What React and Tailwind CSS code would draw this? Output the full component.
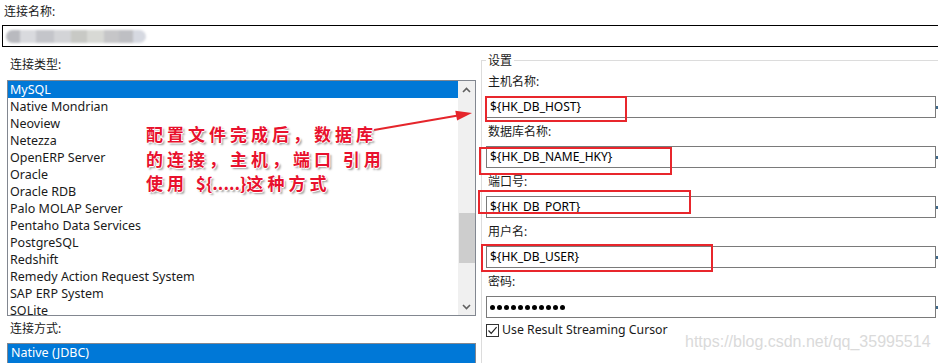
import React from 'react';

const TYPES = [
  'MySQL',
  'Native Mondrian',
  'Neoview',
  'Netezza',
  'OpenERP Server',
  'Oracle',
  'Oracle RDB',
  'Palo MOLAP Server',
  'Pentaho Data Services',
  'PostgreSQL',
  'Redshift',
  'Remedy Action Request System',
  'SAP ERP System',
  'SQLite',
];

const FIELDS = [
  { label: '主机名称:', value: '${HK_DB_HOST}' },
  { label: '数据库名称:', value: '${HK_DB_NAME_HKY}' },
  { label: '端口号:', value: '${HK_DB_PORT}' },
  { label: '用户名:', value: '${HK_DB_USER}' },
];

// label + boxed input, the little tick is the clipped button on the right
function Field({ label, children }) {
  return (
    <div>
      <div className="h-[28px] pt-[6px] pl-[2px] leading-[16px]">{label}</div>
      <div className="flex items-center">
        <div className="w-[450px] h-[22px] border border-[#7a7a7a] pl-[3px] leading-[20px] text-black">
          {children}
        </div>
        <div className="w-[2px] h-[3px] bg-[#3f6a8c]" />
      </div>
    </div>
  );
}

function Chevron({ up }) {
  return (
    <svg width="9" height="6" viewBox="0 0 9 6">
      <path
        d={up ? 'M1 5 L4.5 1.5 L8 5' : 'M1 1 L4.5 4.5 L8 1'}
        fill="none"
        stroke="#606060"
        strokeWidth="1.6"
      />
    </svg>
  );
}

const BLURS = [
  ['w-[14px]', 'bg-[#b9babf]', 'rounded-l-full'],
  ['w-[16px]', 'bg-[#d9dade]', ''],
  ['w-[18px]', 'bg-[#c4c5ca]', ''],
  ['w-[17px]', 'bg-[#d3d4d7]', ''],
  ['w-[16px]', 'bg-[#c8c9c5]', ''],
  ['w-[17px]', 'bg-[#d8d9d5]', ''],
  ['w-[15px]', 'bg-[#c6c6c8]', ''],
  ['w-[14px]', 'bg-[#bebfc3]', ''],
  ['w-[13px]', 'bg-[#d6d9e1]', 'rounded-r-full'],
];

export default function App() {
  return (
    <div className="relative w-[938px] h-[363px] overflow-hidden bg-white text-[12px] text-[#1a1a1a] font-['Noto_Sans','Noto_Sans_CJK_SC',sans-serif]">
      {/* connection name */}
      <div className="h-[25px] pt-[4px] pl-[4px] leading-[16px]">连接名称:</div>
      <div className="ml-[2px] w-[960px] h-[22px] border border-black">
        <div className="flex items-center h-full pl-[3px] blur-[1px]">
          {BLURS.map(([w, bg, r], i) => (
            <div key={i} className={`${w} h-[13px] ${bg} ${r}`} />
          ))}
        </div>
      </div>

      <div className="flex">
        {/* left column */}
        <div className="w-[481px] shrink-0 pl-[7px]">
          <div className="h-[33px] pt-[10px] pl-[3px] leading-[16px]">连接类型:</div>
          <div className="w-[469px] h-[236px] border border-[#828790] flex overflow-hidden">
            <div className="w-[450px] text-[12.5px]">
              {TYPES.map((t, i) => (
                <div
                  key={t}
                  className={`h-[17px] leading-[17px] pl-[2px] whitespace-nowrap ${
                    i === 0 ? 'bg-[#0078d7] text-white' : ''
                  }`}
                >
                  {t}
                </div>
              ))}
            </div>
            <div className="w-[17px] bg-[#f0f0f0] flex flex-col items-center">
              <div className="h-[17px] flex items-center justify-center">
                <Chevron up />
              </div>
              <div className="flex-1 w-full pl-px">
                <div className="mt-[115px] w-[16px] h-[50px] bg-[#cdcdcd]" />
              </div>
              <div className="h-[17px] flex items-center justify-center">
                <Chevron />
              </div>
            </div>
          </div>
          <div className="h-[27px] pt-[5px] pl-[3px] leading-[16px]">连接方式:</div>
          <div className="w-[469px] h-[30px] border border-[#828790]">
            <div className="h-full bg-[#0078d7] text-white text-[12.5px] pl-[3px] leading-[18px]">Native (JDBC)</div>
          </div>
        </div>

        {/* right column */}
        <div className="flex-1 pt-[6px]">
          <fieldset className="w-[470px] h-[330px] border-t border-l border-r border-[#dcdcdc] pl-[4px]">
            <legend className="px-[2px] leading-[15px]">设置</legend>
            {FIELDS.map((f) => (
              <Field key={f.label} label={f.label}>
                {f.value}
              </Field>
            ))}
            <Field label="密码:">
              <div className="flex items-center h-full gap-[2px]">
                {Array.from({ length: 11 }).map((_, i) => (
                  <div key={i} className="w-[5px] h-[5px] rounded-full bg-black" />
                ))}
              </div>
            </Field>
            <div className="mt-[5px] flex items-center">
              <div className="w-[13px] h-[13px] border border-[#333] bg-white flex items-center justify-center">
                <svg width="11" height="11" viewBox="0 0 11 11">
                  <path d="M1.5 5.5 L4.2 8.3 L9.6 2.2" fill="none" stroke="#222" strokeWidth="1.2" />
                </svg>
              </div>
              <span className="ml-[3px] leading-[14px] text-[12.3px]">Use Result Streaming Cursor</span>
            </div>
          </fieldset>
        </div>
      </div>

      {/* annotation overlays */}
      <div className="absolute left-[485px] top-[96px] w-[142px] h-[26px] border-2 border-[#e8262c]" />
      <div className="absolute left-[479px] top-[147px] w-[193px] h-[28px] border-2 border-[#e8262c]" />
      <div className="absolute left-[478px] top-[190px] w-[213px] h-[24px] border-2 border-[#e8262c]" />
      <div className="absolute left-[481px] top-[244px] w-[232px] h-[28px] border-2 border-[#e8262c]" />

      <svg className="absolute left-0 top-0" width="938" height="363">
        <line x1="374" y1="130" x2="458" y2="115.5" stroke="#e5252b" strokeWidth="2" />
        <polygon points="472,113 457.1,120.6 455.3,110.8" fill="#e5252b" />
      </svg>

      <div className="absolute left-[146px] top-[122px] text-[17px] leading-[24.5px] tracking-[4px] font-bold text-[#e8112d] font-['Noto_Sans_CJK_SC',sans-serif] [text-shadow:1px_0_0_#fff,-1px_0_0_#fff,0_1px_0_#fff,0_-1px_0_#fff,2px_2px_2px_#999]">
        <div>配置文件完成后，数据库</div>
        <div>的连接，主机，端口 引用</div>
        <div>
          使用 <span className="tracking-[0px]">${'{'}.....{'}'}</span>这种方式
        </div>
      </div>

      <div className="absolute left-[685px] top-[333px] text-[16px] leading-[18px] text-[#dadada] font-['Liberation_Sans',Arial,sans-serif]">
        https://blog.csdn.net/qq_35995514
      </div>
    </div>
  );
}
